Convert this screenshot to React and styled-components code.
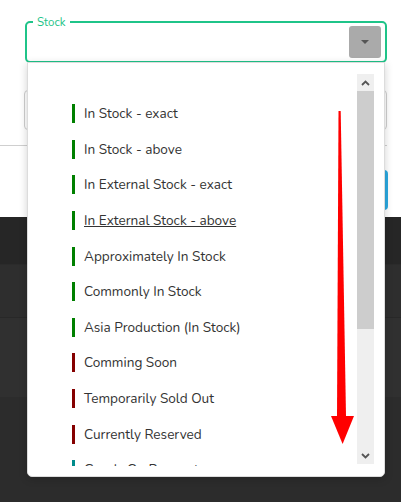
import styled, { createGlobalStyle } from "styled-components";

const GlobalStyle = createGlobalStyle`
  html, body {
    margin: 0;
    padding: 0;
    background: #2c2c2c;
  }
  body {
    font-family: "Nunito", Lato, "Open Sans", sans-serif;
  }
`;

const Page = styled.div`
  width: 401px;
  height: 502px;
  overflow: hidden;
  position: relative;
`;

const FormArea = styled.div`
  background: #fff;
  height: 217px;
  padding-top: 22px;
  box-sizing: border-box;
`;

const FieldWrap = styled.div`
  position: relative;
  margin: 0 14px 0 25px;
  height: 41px;
`;

// fieldset is pulled up so the legend sits on the top border line
const Fieldset = styled.fieldset`
  margin: 0;
  padding: 0 4px 0 0;
  box-sizing: border-box;
  border: 2px solid #1fc489;
  border-radius: 5px;
  display: flex;
  align-items: center;
  justify-content: flex-end;
  position: relative;
  top: -5px;
  height: 46px;
`;

const Legend = styled.legend`
  margin-left: 6px;
  padding: 0 4px;
  font-size: 11.5px;
  line-height: 10px;
  color: #1fc489;
`;

const DropButton = styled.div`
  width: 32px;
  height: 32px;
  background: #aaaaaa;
  border-radius: 3px;
  display: flex;
  align-items: center;
  justify-content: center;
  margin-top: -4px;

  &::after {
    content: "";
    border-left: 4px solid transparent;
    border-right: 4px solid transparent;
    border-top: 4px solid #555;
  }
`;

const GhostInput = styled.div`
  margin: 27px 14px 0 24px;
  height: 40px;
  border: 1px solid #cfcfcf;
  border-radius: 4px;
  box-sizing: border-box;
`;

const Rule = styled.div`
  margin: 15px 14px 0 0;
  height: 1px;
  background: #cfcfcf;
`;

const ButtonRow = styled.div`
  display: flex;
  justify-content: flex-end;
  margin: 24px 13px 0 0;
`;

const SaveButton = styled.div`
  width: 90px;
  height: 40px;
  border-radius: 4px;
  background: #2ba9e1;
`;

const TableRow = styled.div`
  height: ${(p) => p.$h}px;
  background: ${(p) => p.$bg};
  border-bottom: 1px solid ${(p) => p.$line || "transparent"};
  box-sizing: border-box;
`;

const Panel = styled.div`
  position: absolute;
  left: 2px;
  top: 40px;
  width: 358px;
  height: 415px;
  background: #fff;
  border: 1px solid #dcdcdc;
  border-radius: 0 0 5px 5px;
  box-shadow: 0 2px 9px rgba(0, 0, 0, 0.18);
  box-sizing: border-box;
  display: flex;
  padding: 11px 10px 12px 0;
  z-index: 2;
`;

const ListViewport = styled.div`
  flex: 1;
  overflow: hidden;
  margin-bottom: -2px;
`;

const List = styled.ul`
  list-style: none;
  margin: 0;
  padding: 22px 0 0 44px;
`;

const Item = styled.li`
  height: 35.6px;
  display: flex;
  align-items: center;
  font-size: 13.6px;
  color: #333;
  text-decoration: ${(p) => (p.$hover ? "underline" : "none")};

  &::before {
    content: "";
    width: 3px;
    height: 19px;
    margin-right: 9px;
    background: ${(p) => p.$color};
    flex: none;
  }
`;

const Scrollbar = styled.div`
  width: 17px;
  background: #efefef;
  display: flex;
  flex-direction: column;
`;

const ScrollArrow = styled.div`
  height: 17px;
  display: flex;
  align-items: center;
  justify-content: center;
  flex: none;
`;

const Thumb = styled.div`
  height: 238px;
  background: #cdcdcd;
  flex: none;
`;

const Spacer = styled.div`
  flex: 1;
`;

const ArrowOverlay = styled.svg`
  position: absolute;
  left: 0;
  top: 0;
  pointer-events: none;
  z-index: 3;
`;

const GREEN = "#008000";
const RED = "#850000";
const TEAL = "#008b8b";

const options = [
  { label: "In Stock - exact", color: GREEN },
  { label: "In Stock - above", color: GREEN },
  { label: "In External Stock - exact", color: GREEN },
  { label: "In External Stock - above", color: GREEN, hover: true },
  { label: "Approximately In Stock", color: GREEN },
  { label: "Commonly In Stock", color: GREEN },
  { label: "Asia Production (In Stock)", color: GREEN },
  { label: "Comming Soon", color: RED },
  { label: "Temporarily Sold Out", color: RED },
  { label: "Currently Reserved", color: RED },
  { label: "Goods On Request", color: TEAL },
];

const Chevron = ({ up }) => (
  <svg width="9" height="6" viewBox="0 0 9 6">
    <path
      d={up ? "M1 5 L4.5 1.5 L8 5" : "M1 1 L4.5 4.5 L8 1"}
      fill="none"
      stroke="#555"
      strokeWidth="1.8"
    />
  </svg>
);

export default function App() {
  return (
    <Page>
      <GlobalStyle />
      <FormArea>
        <FieldWrap>
          <Fieldset>
            <Legend>Stock</Legend>
            <DropButton />
          </Fieldset>
          <Panel>
            <ListViewport>
              <List>
                {options.map((o) => (
                  <Item key={o.label} $color={o.color} $hover={o.hover}>
                    {o.label}
                  </Item>
                ))}
              </List>
            </ListViewport>
            <Scrollbar>
              <ScrollArrow>
                <Chevron up />
              </ScrollArrow>
              <Thumb />
              <Spacer />
              <ScrollArrow>
                <Chevron />
              </ScrollArrow>
            </Scrollbar>
          </Panel>
        </FieldWrap>
        <GhostInput />
        <Rule />
        <ButtonRow>
          <SaveButton />
        </ButtonRow>
      </FormArea>
      <TableRow $h={48} $bg="#262626" $line="#2b2b2b" />
      <TableRow $h={53} $bg="#2e2e2e" $line="#282828" />
      <TableRow $h={79} $bg="#303030" />
      <TableRow $h={105} $bg="#2c2c2c" />
      <ArrowOverlay width="401" height="502">
        <polygon points="338.5,111 340.7,111 346,416 337,416" fill="#ff0000" />
        <polygon points="331,416 354,416 342.6,444" fill="#ff0000" />
      </ArrowOverlay>
    </Page>
  );
}
